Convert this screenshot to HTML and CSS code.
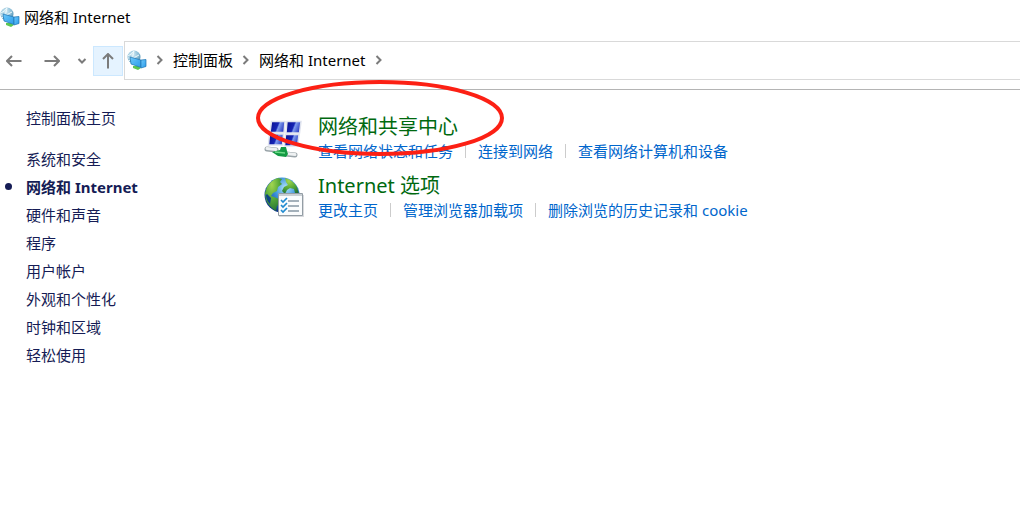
FILE: index.html
```html
<!DOCTYPE html>
<html lang="zh-CN">
<head>
<meta charset="utf-8">
<meta name="viewport" content="width=device-width, initial-scale=1">
<title>网络和 Internet</title>
<link rel="stylesheet" href="styles.css">
</head>
<body>
<svg class="defs" aria-hidden="true">
  <defs>
    <radialGradient id="ball" cx=".4" cy=".3" r=".7"><stop offset="0" stop-color="#d9eef6"/><stop offset=".6" stop-color="#8dbfd8"/><stop offset="1" stop-color="#4b8db0"/></radialGradient>
    <linearGradient id="glass" x1="0" y1="0" x2="1" y2="1"><stop offset="0" stop-color="#6cc8fa"/><stop offset="1" stop-color="#2b9bea"/></linearGradient>
    <linearGradient id="blue" x1="0" y1=".4" x2="1" y2=".7"><stop offset="0" stop-color="#0a1296"/><stop offset=".45" stop-color="#1524b4"/><stop offset=".55" stop-color="#7e9bee"/><stop offset="1" stop-color="#1a2ab8"/></linearGradient>
    <radialGradient id="ocean" cx=".6" cy=".3" r=".7"><stop offset="0" stop-color="#b5e6fa"/><stop offset=".45" stop-color="#3c93dc"/><stop offset="1" stop-color="#0c3389"/></radialGradient>
    <radialGradient id="land" cx=".4" cy=".2" r=".9"><stop offset="0" stop-color="#a2d650"/><stop offset=".5" stop-color="#55a838"/><stop offset="1" stop-color="#1d6a35"/></radialGradient>
    <symbol id="network" viewBox="0 0 20 20">
      <circle cx="7" cy="7" r="6.500" fill="url(#ball)"/>
      <path d="M1 6q4-2 6-5M2 11q5-4 5-10M1 8q6 1 11-3" fill="none" stroke="#eef9fc"/>
      <path d="M6 16l5 0 3 2-3 2-5-2z" fill="#5cc653"/>
      <path d="M3 7l11 3v7.500L4 14z" fill="url(#glass)" stroke="#1d72b0" stroke-width=".7"/>
      <path d="M14 10l5-.5v7L14 18z" fill="url(#glass)" stroke="#1d72b0" stroke-width=".7"/>
    </symbol>
  </defs>
</svg>
<header class="header">
  <div class="titlebar">
    <svg class="title-icon" aria-hidden="true"><use href="#network"/></svg>
    <h1 class="title">网络和 Internet</h1>
  </div>
  <div class="toolbar">
    <button class="nav-button back" type="button" aria-label="后退"><svg class="arrow" viewBox="0 0 16 16"><path d="M15.500 8H1M6 3L1 8l5 5"/></svg></button>
    <button class="nav-button" type="button" aria-label="前进"><svg class="arrow" viewBox="0 0 16 16"><path d="M.5 8H15M10 3l5 5-5 5"/></svg></button>
    <button class="nav-button recent" type="button" aria-label="最近的位置"><svg class="chevron" viewBox="0 0 10 10"><path d="M1.500 3L5 6.500 8.500 3"/></svg></button>
    <button class="nav-button up" type="button" aria-label="上移"><svg class="arrow" viewBox="0 0 16 16"><path d="M8 15.500V1M3 6l5-5 5 5"/></svg></button>
    <nav class="address" aria-label="路径">
      <svg class="title-icon" aria-hidden="true"><use href="#network"/></svg>
      <svg class="chevron" viewBox="0 0 10 10"><path d="M2.500 1L6.500 5l-4 4"/></svg>
      <a class="crumb" href="#">控制面板</a>
      <svg class="chevron" viewBox="0 0 10 10"><path d="M2.500 1L6.500 5l-4 4"/></svg>
      <a class="crumb" href="#">网络和 Internet</a>
      <svg class="chevron" viewBox="0 0 10 10"><path d="M2.500 1L6.500 5l-4 4"/></svg>
    </nav>
  </div>
</header>
<div class="content">
  <nav class="sidebar" aria-label="类别">
    <a class="side-link home" href="#">控制面板主页</a>
    <a class="side-link" href="#">系统和安全</a>
    <a class="side-link current" href="#" aria-current="page">网络和 Internet</a>
    <a class="side-link" href="#">硬件和声音</a>
    <a class="side-link" href="#">程序</a>
    <a class="side-link" href="#">用户帐户</a>
    <a class="side-link" href="#">外观和个性化</a>
    <a class="side-link" href="#">时钟和区域</a>
    <a class="side-link" href="#">轻松使用</a>
  </nav>
  <main class="main">
    <section class="category">
      <svg class="category-icon" viewBox="0 0 40 40" aria-hidden="true">
        <g fill="url(#blue)" stroke="#dfe3ee" stroke-width="1.500">
          <path d="M7.500 3.500h13.500l-1 11H6z"/><path d="M23 3.500h14l-1.500 11.500H22z"/>
          <path d="M5.500 16h14l-1 11H4.500z"/><path d="M21.500 16.500h13.500l-1.500 11.500H20.500z"/>
        </g>
        <path d="M3 31l9 1M22 36l9 1" stroke="#9aa4a9" stroke-width="5" stroke-linecap="round"/>
        <path d="M3 30.500l9 1M22 35.500l9 1" stroke="#eef1f2" stroke-width="3" stroke-linecap="round"/>
        <path d="M8 34l8-2 1-3h5l1 4 1 3-2 3-8-1z" fill="#139a43"/>
        <path d="M11 34l10 1" stroke="#6fd988" stroke-width="1.500"/>
      </svg>
      <div class="category-text">
        <h2 class="heading"><a class="heading-link" href="#">网络和共享中心</a></h2>
        <ul class="tasks">
          <li class="task"><a class="task-link" href="#">查看网络状态和任务</a></li>
          <li class="task"><a class="task-link" href="#">连接到网络</a></li>
          <li class="task"><a class="task-link" href="#">查看网络计算机和设备</a></li>
        </ul>
      </div>
      <svg class="marker" viewBox="0 0 248 78" aria-hidden="true"><ellipse cx="124" cy="39" rx="122" ry="36" fill="none" stroke="#fc2014" stroke-width="4"/></svg>
    </section>
    <section class="category">
      <svg class="category-icon" viewBox="0 0 40 40" aria-hidden="true">
        <circle cx="18" cy="18" r="17.500" fill="url(#ocean)"/>
        <path d="M3 10Q7 3 14 1l4 1-2 3 2 2-4 3-1 4-4 2-2 3 3 1 5 2 1 4-3 3-1 5Q5 30 2 23L1 16z" fill="url(#land)"/>
        <path d="M21 1q8 2 12 9l2 7-4-1-1-4-4-1-3 2-2 4-3-3 2-4 4-2-2-3z" fill="url(#land)"/>
        <path d="M3 17l4 4-1 6q-4-4-4-9z" fill="#0d4386"/>
        <path d="M15 18h25v22H15z" fill="#d8dadd"/>
        <path d="M14.500 16.500h24v22h-24z" fill="#fafcfd" stroke="#939da5"/>
        <path d="M15 17h23v2H15z" fill="#c9cfd4"/>
        <path d="M24 24h11M24 29h11M24 34h11" stroke="#8796a4" stroke-width="1.500"/>
        <path d="M17 23l2 2 4-4M17 28l2 2 4-4M17 33l2 2 4-4" fill="none" stroke="#218bd0" stroke-width="1.700"/>
      </svg>
      <div class="category-text">
        <h2 class="heading"><a class="heading-link" href="#">Internet 选项</a></h2>
        <ul class="tasks">
          <li class="task"><a class="task-link" href="#">更改主页</a></li>
          <li class="task"><a class="task-link" href="#">管理浏览器加载项</a></li>
          <li class="task"><a class="task-link" href="#">删除浏览的历史记录和 cookie</a></li>
        </ul>
      </div>
    </section>
  </main>
</div>
</body>
</html>
```
FILE: styles.css
```css
* { box-sizing: border-box; }
body {
  margin: 0;
  background: #fff;
  color: #000;
  font: 15px/20px "Noto Sans", "Noto Sans CJK SC", sans-serif;
}
a { color: inherit; text-decoration: none; }
.defs { position: absolute; width: 0; height: 0; }
.header { border-bottom: 1px solid #b4b4b4; padding-bottom: 9px; }
.titlebar { display: flex; align-items: center; height: 34px; gap: 4px; }
.title { margin: 0; font-size: 15px; font-weight: 400; }
.title-icon { width: 20px; height: 20px; flex: none; }
.toolbar { display: flex; align-items: center; margin-top: 7px; }
.nav-button {
  display: flex;
  align-items: center;
  justify-content: center;
  width: 48px;
  height: 30px;
  flex: none;
  padding: 0;
  border: 0;
  background: none;
}
.nav-button.back { width: 28px; }
.nav-button.recent { width: 12px; }
.nav-button.up {
  width: 30px;
  margin: 0 1px 0 5px;
  border: 1px solid #cce8ff;
  background: #e5f3ff;
}
.arrow, .chevron {
  flex: none;
  fill: none;
  stroke: #7b7b7b;
  stroke-width: 2;
}
.arrow { width: 16px; height: 16px; }
.chevron { width: 10px; height: 10px; }
.address {
  display: flex;
  flex: 1;
  align-items: center;
  gap: 8px;
  height: 39px;
  padding: 0 0 2px 2px;
  border: 1px solid #d9d9d9;
  border-right: 0;
}
.content { display: grid; grid-template-columns: 264px 1fr; }
.sidebar {
  display: flex;
  flex-direction: column;
  align-items: flex-start;
  padding: 14px 0 0 26px;
  color: #151c55;
}
.side-link { position: relative; line-height: 28px; }
.home { margin-bottom: 13px; }
.current { font-weight: 700; }
.current::before {
  content: "";
  position: absolute;
  left: -21px;
  top: 10px;
  width: 7px;
  height: 7px;
  border-radius: 50%;
  background: #151c55;
}
.main { padding-top: 23px; }
.category {
  position: relative;
  display: flex;
  gap: 14px;
  margin-bottom: 11px;
}
.category-icon { width: 40px; height: 40px; flex: none; margin-top: 5px; }
.heading { margin: 0; font-size: 20px; font-weight: 400; line-height: 28px; color: #00690f; }
.tasks { display: flex; margin: 0; padding: 0; list-style: none; color: #0066cc; }
.task { display: flex; align-items: center; }
.task + .task::before {
  content: "";
  width: 1px;
  height: 14px;
  margin: 0 12px;
  background: #ccc;
}
.marker {
  position: absolute;
  left: -8px;
  top: -34px;
  width: 248px;
  height: 78px;
  pointer-events: none;
}
```
